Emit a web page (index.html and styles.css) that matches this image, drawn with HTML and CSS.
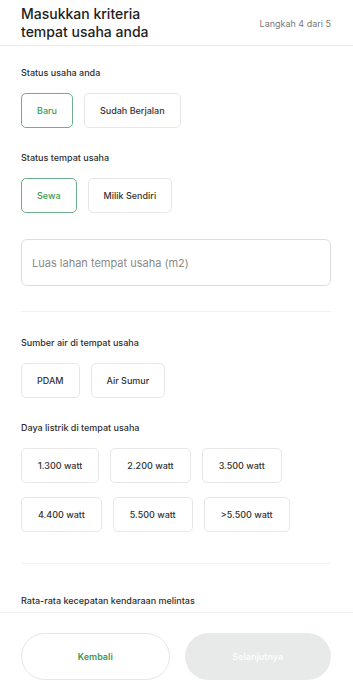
FILE: index.html
```html
<!DOCTYPE html>
<html lang="id">
<head>
<meta charset="utf-8">
<title>Kriteria tempat usaha</title>
<link rel="stylesheet" href="styles.css">
</head>
<body>
<div class="app">
  <header class="header">
    <h1 class="title">Masukkan kriteria<br>tempat usaha anda</h1>
    <span class="step">Langkah 4 dari 5</span>
  </header>
  <main class="main">
    <section class="field">
      <div class="label">Status usaha anda</div>
      <div class="options">
        <button class="option selected">Baru</button>
        <button class="option">Sudah Berjalan</button>
      </div>
    </section>
    <section class="field field-b">
      <div class="label">Status tempat usaha</div>
      <div class="options">
        <button class="option selected">Sewa</button>
        <button class="option">Milik Sendiri</button>
      </div>
    </section>
    <div class="input">Luas lahan tempat usaha (m2)</div>
    <hr class="divider">
    <section class="field">
      <div class="label">Sumber air di tempat usaha</div>
      <div class="options">
        <button class="option">PDAM</button>
        <button class="option">Air Sumur</button>
      </div>
    </section>
    <section class="field field-c">
      <div class="label">Daya listrik di tempat usaha</div>
      <div class="options watt">
        <button class="option">1.300 watt</button>
        <button class="option">2.200 watt</button>
        <button class="option">3.500 watt</button>
      </div>
      <div class="options watt row2">
        <button class="option">4.400 watt</button>
        <button class="option">5.500 watt</button>
        <button class="option">&gt;5.500 watt</button>
      </div>
    </section>
    <hr class="divider divider-b">
    <section class="field">
      <div class="label">Rata-rata kecepatan kendaraan melintas</div>
    </section>
  </main>
  <footer class="footer">
    <button class="btn btn-back">Kembali</button>
    <button class="btn btn-next">Selanjutnya</button>
  </footer>
</div>
</body>
</html>
```

FILE: styles.css
```css
* { box-sizing: border-box; }
html, body { margin: 0; padding: 0; background: #fff; }
body {
  font-family: Inter, "Noto Sans", "DejaVu Sans", sans-serif;
  color: #2a2a2a;
}
.app {
  width: 353px;
  height: 695px;
  display: flex;
  flex-direction: column;
  overflow: hidden;
}
.header {
  display: flex;
  justify-content: space-between;
  align-items: center;
  padding: 5px 22px 4px 21px;
  border-bottom: 1px solid #e9e9e9;
  flex: none;
}
.title {
  margin: 0;
  font-size: 14px;
  line-height: 18px;
  font-weight: 500;
  color: #1e1e1e;
}
.step {
  font-size: 9px;
  color: #7a7a7a;
}
.main {
  flex: 1;
  overflow: hidden;
  padding: 21px 22px 0 21px;
}
.field { margin-bottom: 24px; }
.field-b { margin-bottom: 26px; }
.field-c { margin-bottom: 31px; }
.label {
  font-size: 9px;
  line-height: 12px;
  font-weight: 500;
  color: #2e2e2e;
  margin-bottom: 14px;
}
.options {
  display: flex;
  gap: 11px;
}
.row2 { margin-top: 14px; }
.option {
  height: 35px;
  padding: 0 15px;
  background: #fff;
  border: 1px solid #e7e7e7;
  border-radius: 5px;
  font-family: inherit;
  font-size: 9px;
  font-weight: 500;
  color: #333;
}
.watt .option { padding: 0 16px; }
.option.selected {
  border-color: #6fae8c;
  color: #3c9a50;
}
.input {
  height: 47px;
  border: 1px solid #dedede;
  border-radius: 6px;
  padding: 0 10px;
  display: flex;
  align-items: center;
  font-size: 11px;
  color: #8a8a8a;
}
.divider {
  border: 0;
  border-top: 1px solid #f1f1f1;
  margin: 25px 0 25px;
}
.divider-b { margin: 0 0 31px; }
.footer {
  flex: none;
  border-top: 1px solid #efefef;
  padding: 20px 22px 15px 21px;
  display: flex;
  gap: 15px;
}
.btn {
  flex: 1;
  height: 47px;
  border-radius: 24px;
  font-family: inherit;
  font-size: 9px;
  font-weight: 600;
}
.btn-back {
  background: #fff;
  border: 1px solid #e6e6e6;
  color: #3c9a50;
}
.btn-next {
  background: #e8eaea;
  border: 0;
  color: #fbfbfb;
}
```
